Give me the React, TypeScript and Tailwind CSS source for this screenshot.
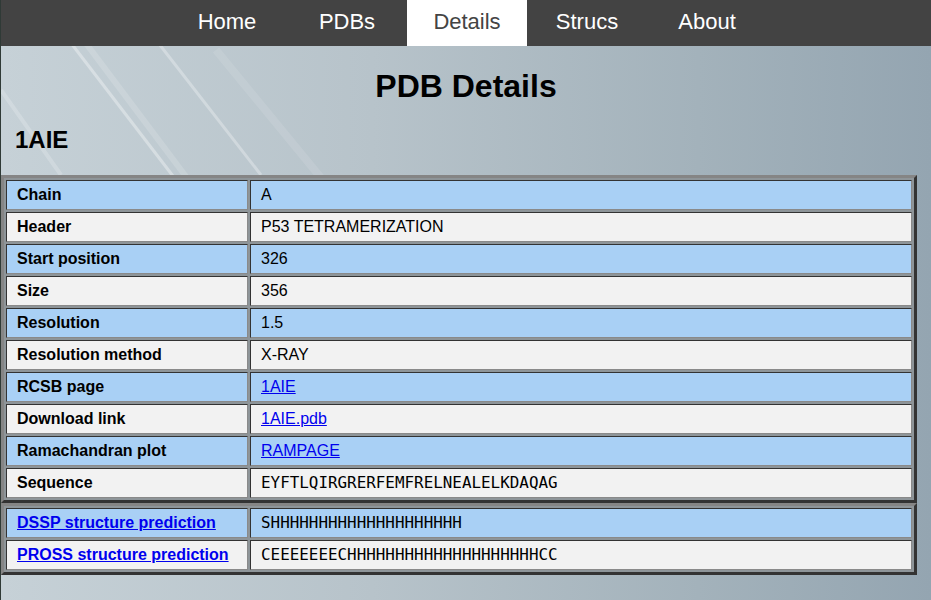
const NAV = ['Home', 'PDBs', 'Details', 'Strucs', 'About'];

type Row = { label: string; value: string; link?: boolean; mono?: boolean; labelLink?: boolean };

const DETAILS: Row[] = [
  { label: 'Chain', value: 'A' },
  { label: 'Header', value: 'P53 TETRAMERIZATION' },
  { label: 'Start position', value: '326' },
  { label: 'Size', value: '356' },
  { label: 'Resolution', value: '1.5' },
  { label: 'Resolution method', value: 'X-RAY' },
  { label: 'RCSB page', value: '1AIE', link: true },
  { label: 'Download link', value: '1AIE.pdb', link: true },
  { label: 'Ramachandran plot', value: 'RAMPAGE', link: true },
  { label: 'Sequence', value: 'EYFTLQIRGRERFEMFRELNEALELKDAQAG', mono: true },
];

const PREDICTIONS: Row[] = [
  { label: 'DSSP structure prediction', value: 'SHHHHHHHHHHHHHHHHHHHH', mono: true, labelLink: true },
  { label: 'PROSS structure prediction', value: 'CEEEEEEECHHHHHHHHHHHHHHHHHHHHCC', mono: true, labelLink: true },
];

function DataTable({ rows }: { rows: Row[] }) {
  const cell = 'border border-t-[#333] border-l-[#333] border-b-[#8a8a8a] border-r-[#8a8a8a] px-[10px] py-[5px] leading-[18px] text-[16px] text-left';
  return (
    <table className="w-[916px] border-separate border-spacing-[2px] border-[3px] border-t-[#858585] border-l-[#858585] border-b-[#333] border-r-[#333] bg-[#8e9599]">
      <tbody>
        {rows.map((r, i) => {
          const bg = i % 2 === 0 ? 'bg-[#a9d0f5]' : 'bg-[#f2f2f2]';
          return (
            <tr key={r.label}>
              <td className={`${cell} ${bg} w-[242px] font-bold`}>
                {r.labelLink ? <a href="#" className="text-[#0000ee] underline">{r.label}</a> : r.label}
              </td>
              <td className={`${cell} ${bg}`}>
                {r.link ? (
                  <a href="#" className="text-[#0000ee] underline">{r.value}</a>
                ) : r.mono ? (
                  <span className="font-['DejaVu_Sans_Mono',monospace] text-[15.9px]">{r.value}</span>
                ) : (
                  r.value
                )}
              </td>
            </tr>
          );
        })}
      </tbody>
    </table>
  );
}

export default function App() {
  return (
    <div className="relative min-h-[600px] w-[931px] overflow-hidden border-l border-[#2f3a36] bg-[linear-gradient(90deg,#c6d1d7_0%,#b7c3ca_40%,#a3b2bb_75%,#94a5b1_100%)] font-['Liberation_Sans',Arial,sans-serif] text-black">
      <svg className="absolute left-0 top-0 pointer-events-none" width="931" height="600">
        <line x1="60" y1="30" x2="175" y2="180" stroke="#ffffff" strokeOpacity="0.35" strokeWidth="3" />
        <line x1="75" y1="30" x2="195" y2="190" stroke="#ffffff" strokeOpacity="0.15" strokeWidth="6" />
        <line x1="155" y1="40" x2="260" y2="175" stroke="#ffffff" strokeOpacity="0.3" strokeWidth="3" />
        <line x1="0" y1="90" x2="60" y2="175" stroke="#ffffff" strokeOpacity="0.2" strokeWidth="4" />
        <line x1="215" y1="50" x2="330" y2="190" stroke="#ffffff" strokeOpacity="0.1" strokeWidth="8" />
      </svg>

      <div className="relative">
        <nav className="flex h-[46px] justify-center bg-[#434343] pl-[2px]">
          {NAV.map(n => (
            <a
              key={n}
              href="#"
              className={`flex w-[120px] items-center justify-center text-[22px] pb-[3px] ${
                n === 'Details' ? 'bg-white text-[#444]' : 'text-white'
              }`}
            >
              {n}
            </a>
          ))}
        </nav>

        <h1 className="mt-[22px] text-center text-[32px] font-bold leading-[37px]">PDB Details</h1>
        <h2 className="mt-[21px] mb-[21px] pl-[14px] text-[24px] font-bold leading-[28px]">1AIE</h2>

        <DataTable rows={DETAILS} />
        <DataTable rows={PREDICTIONS} />
      </div>
    </div>
  );
}
